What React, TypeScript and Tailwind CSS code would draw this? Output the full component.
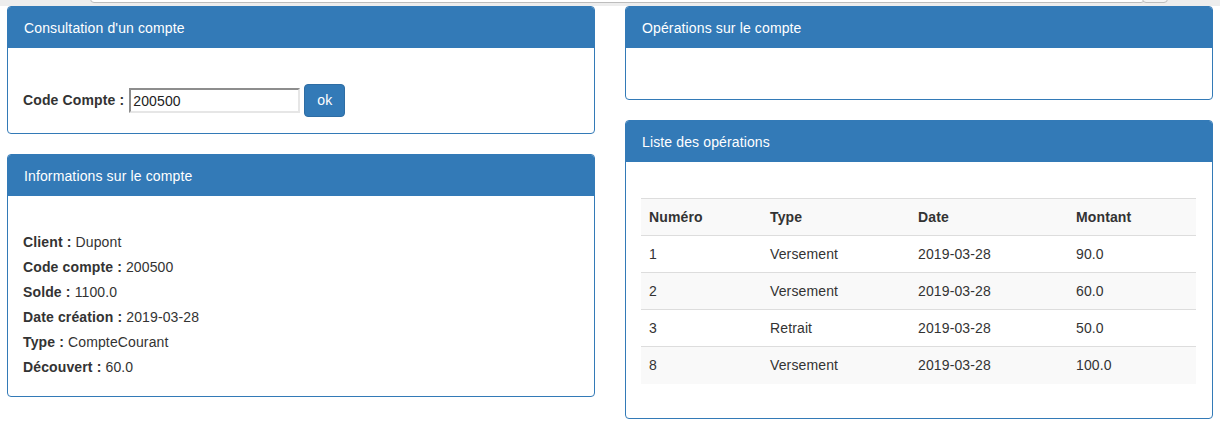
import React from "react";

const ops = [
  { num: "1", type: "Versement", date: "2019-03-28", montant: "90.0" },
  { num: "2", type: "Versement", date: "2019-03-28", montant: "60.0" },
  { num: "3", type: "Retrait", date: "2019-03-28", montant: "50.0" },
  { num: "8", type: "Versement", date: "2019-03-28", montant: "100.0" },
];

const infos = [
  ["Client :", "Dupont"],
  ["Code compte :", "200500"],
  ["Solde :", "1100.0"],
  ["Date création :", "2019-03-28"],
  ["Type :", "CompteCourant"],
  ["Découvert :", "60.0"],
];

function Panel({ title, className, children }: { title: string; className?: string; children?: React.ReactNode }) {
  return (
    <div className={`border border-[#337ab7] rounded-[4px] bg-white ${className ?? ""}`}>
      <div className="h-[41px] flex items-center pt-[2px] px-[16px] bg-[#337ab7] text-white text-[14px] rounded-t-[3px]">
        {title}
      </div>
      {children}
    </div>
  );
}

export default function App() {
  return (
    <div className="w-[1220px] h-[429px] bg-white text-[#333] text-[14px] tracking-[0.13px] font-['Liberation_Sans',Arial,sans-serif] overflow-hidden">
      {/* scrolled-off toolbar edge */}
      <div className="h-[6px] bg-[#ededed] overflow-hidden flex items-start">
        <div className="ml-[90px] -mt-[17px] w-[1055px] h-[20px] bg-white border border-[#bdbdbd] rounded-[4px]" />
        <div className="-ml-[3px] -mt-[17px] w-[26px] h-[20px] bg-[#f4f4f4] border border-[#bdbdbd] rounded-[4px]" />
      </div>

      <div className="flex gap-[30px] pl-[7px]">
        {/* left column */}
        <div className="w-[588px] flex flex-col">
          <Panel title="Consultation d'un compte">
            <div className="pt-[36px] pb-[16px] px-[15px] flex items-center">
              <label className="font-bold">Code Compte :</label>
              <input
                defaultValue="200500"
                className="ml-[5px] w-[171px] h-[25px] px-[2px] text-[14px] text-[#222] border-2 border-t-[#8d8d8d] border-l-[#8d8d8d] border-b-[#e6e6e6] border-r-[#e6e6e6] outline-none"
              />
              <button className="ml-[4px] h-[33px] w-[41px] bg-[#337ab7] border border-[#2e6da4] rounded-[4px] text-white text-[14px]">
                ok
              </button>
            </div>
          </Panel>

          <Panel title="Informations sur le compte" className="mt-[20px]">
            <div className="pt-[34px] pb-[16px] px-[15px] leading-[25px]">
              {infos.map(([k, v]) => (
                <div key={k}>
                  <span className="font-bold">{k}</span> {v}
                </div>
              ))}
            </div>
          </Panel>
        </div>

        {/* right column */}
        <div className="w-[588px] flex flex-col">
          <Panel title="Opérations sur le compte">
            <div className="h-[51px]" />
          </Panel>

          <Panel title="Liste des opérations" className="mt-[20px]">
            <div className="pt-[36px] pb-[34px] px-[15px]">
              <table className="w-[555px] border-collapse">
                <tbody>
                  <tr className="bg-[#f9f9f9] border-t border-[#dddddd] font-bold">
                    <td className="w-[121px] h-[37px] px-[8px]">Numéro</td>
                    <td className="w-[148px] px-[8px]">Type</td>
                    <td className="w-[158px] px-[8px]">Date</td>
                    <td className="px-[8px]">Montant</td>
                  </tr>
                  {ops.map((o, i) => (
                    <tr key={o.num} className={`border-t border-[#dddddd] ${i % 2 === 1 ? "bg-[#f9f9f9]" : ""}`}>
                      <td className="h-[37px] px-[8px]">{o.num}</td>
                      <td className="px-[8px]">{o.type}</td>
                      <td className="px-[8px]">{o.date}</td>
                      <td className="px-[8px]">{o.montant}</td>
                    </tr>
                  ))}
                </tbody>
              </table>
            </div>
          </Panel>
        </div>
      </div>
    </div>
  );
}
